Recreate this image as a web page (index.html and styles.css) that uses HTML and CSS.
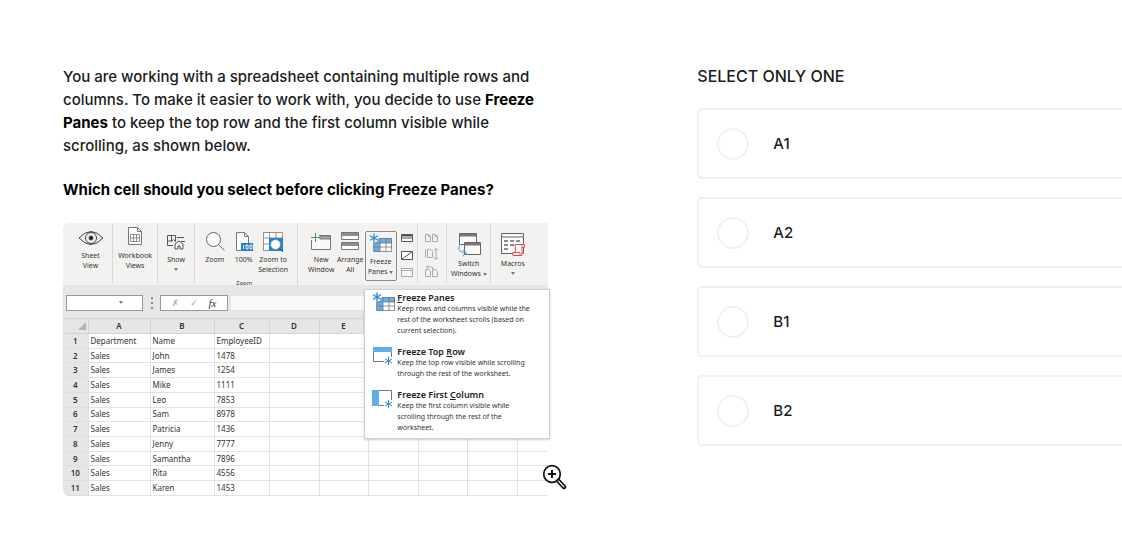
FILE: index.html
```
<!DOCTYPE html>
<html lang="en">
<head>
  <meta charset="UTF-8" />
  <meta name="viewport" content="width=device-width, initial-scale=1.0"/>
  <title>Freeze Panes Question</title>
  <link rel="stylesheet" href="styles.css">
</head>
<body>
  <main class="page">
    <!-- Question -->
    <section class="question">
      <p>You are working with a spreadsheet containing multiple rows and columns. To make it easier to work with, you decide to use <strong>Freeze Panes</strong> to keep the top row and the first column visible while scrolling, as shown below.</p>
      <p><strong>Which cell should you select before clicking Freeze Panes?</strong></p>

      <div class="figure">
        <div class="sheet">
          <!-- Ribbon -->
          <div class="ribbon">
            <div class="group group-sheet">
              <button class="tool tool-high">
                <svg width="28" height="22" viewBox="0 0 28 22" fill="none" stroke="#444"><path d="M2 11Q14-2 26 11Q14 24 2 11Z"/><circle cx="14" cy="11" r="5.5"/><circle cx="14" cy="11" r="2" fill="#222"/></svg>
                <span>Sheet<br>View</span>
              </button>
            </div>
            <div class="group">
              <button class="tool tool-high">
                <svg width="22" height="22" viewBox="0 0 22 22" fill="#fff" stroke="#777"><path d="M4.500.5h9l4 4v13h-13zM13.500.5v4h4"/><path d="M6.500 7.500h9v7h-9zM6.500 11h9M9.500 7.500v7M12.500 7.500v7" stroke-width=".8"/></svg>
                <span>Workbook<br>Views</span>
              </button>
            </div>
            <div class="group">
              <button class="tool">
                <svg width="22" height="22" viewBox="0 0 22 22" fill="none" stroke="#555"><path d="M8 14.500H2.500v-10h8v6l-2-2-2 2v-6M12 6.500h7M2.500 10h4M16 10.500h4M10 14v-1l4-3 4 3v5h-3v-3h-2v3h-3z"/></svg>
                <span>Show</span>
                <i class="arrow"></i>
              </button>
            </div>
            <div class="group group-zoom">
              <div class="group-row">
                <button class="tool">
                  <svg width="22" height="22" viewBox="0 0 22 22" fill="#fafafa" stroke="#666"><circle cx="9.500" cy="8.500" r="7"/><path d="M14.500 13.500l6 6"/></svg>
                  <span>Zoom</span>
                </button>
                <button class="tool">
                  <svg width="22" height="22" viewBox="0 0 22 22" fill="#fff" stroke="#777"><path d="M3.500 1.500h8l4 4v14h-12zM11.500 1.500v4h4"/><path d="M8 12h12v8H8z" fill="#1e7fc4" stroke="none"/><path d="M10.500 14v4M13 14h2v4h-2zM17 14h2v4h-2z" fill="none" stroke="#fff" stroke-width=".9"/></svg>
                  <span>100%</span>
                </button>
                <button class="tool">
                  <svg width="22" height="22" viewBox="0 0 22 22" fill="#fff" stroke="#777"><path d="M1.500 1.500h19v18h-19zM1.500 7h19M1.500 13h19M7.500 1.500v18M14 1.500v18" stroke-width=".8"/><path d="M7 7h14v13H7z" fill="#2484c6" stroke="none"/><circle cx="13.500" cy="13.500" r="4.500" stroke="#ddd"/><path d="M17 17l4 4" stroke="#444"/></svg>
                  <span>Zoom to<br>Selection</span>
                </button>
              </div>
              <span class="group-name">Zoom</span>
            </div>
            <div class="group group-window">
              <button class="tool">
                <svg width="22" height="22" viewBox="0 0 22 22" fill="none" stroke="#777"><path d="M1.500 9v9.500h19v-14H9" fill="#fafafa"/><path d="M10 5h10v3H10z" fill="#aaa"/><path d="M5.500 2v9M1 6.500h9" stroke="#4c9f57"/></svg>
                <span>New<br>Window</span>
              </button>
              <button class="tool">
                <svg width="22" height="22" viewBox="0 0 22 22" fill="#fff" stroke="#777"><path d="M2.500 1.500h17v7h-17zM2.500 11.500h17v7h-17z"/><path d="M3 2h16v3H3zM3 12h16v3H3z" fill="#8d8d8d" stroke="none"/></svg>
                <span>Arrange<br>All</span>
              </button>
              <button class="tool tool-open" aria-expanded="true">
                <svg width="24" height="22" viewBox="0 0 24 22"><use href="#panes"/></svg>
                <span>Freeze<br>Panes <i class="arrow"></i></span>
              </button>
              <div class="stack">
                <button aria-label="Split"><svg width="12" height="10" viewBox="0 0 12 10" fill="#fff" stroke="#555"><path d="M.5 1.500h11v7H.5zM.5 5h11"/><path d="M1 1.500h10v2H1z" fill="#555" stroke="none"/></svg></button>
                <button aria-label="Hide"><svg width="12" height="10" viewBox="0 0 12 10" fill="#fff" stroke="#555"><path d="M.5 1.500h11v8H.5zM1 9L11 2"/></svg></button>
                <button aria-label="Unhide"><svg width="12" height="10" viewBox="0 0 12 10" fill="#f7f7f7" stroke="#aaa"><path d="M.5 1.500h11v8H.5zM.5 3.500h11"/></svg></button>
              </div>
            </div>
            <div class="group">
              <div class="stack">
                <button aria-label="View side by side"><svg width="14" height="10" viewBox="0 0 14 10" fill="none" stroke="#aaa"><path d="M.5 1.500h3l2 2v5h-5zM7.500 1.500h3l2 2v5h-5zM3.500 1.500v2h2M10.500 1.500v2h2"/></svg></button>
                <button aria-label="Synchronous scrolling"><svg width="14" height="12" viewBox="0 0 14 12" fill="none" stroke="#aaa"><path d="M.5 1.500v8M2.500 1.500h3l2 2v6h-5zM11 .5v11M9 2.500l2-2 2 2M9 9.500l2 2 2-2"/></svg></button>
                <button aria-label="Reset window position"><svg width="14" height="12" viewBox="0 0 14 12" fill="none" stroke="#aaa"><path d="M.5 4.500h3l2 2v5h-5zM7.500 4.500h3l2 2v5h-5zM1.500 2h6v2M3.500.5l-2 1.500 2 1.500"/></svg></button>
              </div>
            </div>
            <div class="group">
              <button class="tool tool-low">
                <svg width="24" height="24" viewBox="0 0 24 24" fill="#fafafa" stroke="#666"><path d="M2.500.5h17v11h-17z"/><path d="M3 1h16v2.500H3z" fill="#777" stroke="none"/><path d="M7.500 9.500h16v12h-16z"/><path d="M8 10h15v2.500H8z" fill="#777" stroke="none"/><path d="M4 11c-4 4-3 8 5 9M6 17l3.500 3-4 3" stroke="#3a96d6" fill="none"/></svg>
                <span>Switch<br>Windows <i class="arrow"></i></span>
              </button>
            </div>
            <div class="group group-macros">
              <button class="tool tool-low">
                <svg width="24" height="24" viewBox="0 0 24 24" fill="#fafafa" stroke="#666"><path d="M.5.5h22v20H.5zM.5 4h22"/><path d="M3 8h4M9 8h4M15 8h4M3 12h4M9 12h4M3 16h4" stroke-width="1.500"/><path d="M14 11.500h9.500v3H21v8h-9v-3h2.500zM21 14.500v-3M12 19.500h7v3" stroke="#e8484c" fill="#fff"/></svg>
                <span>Macros</span>
                <i class="arrow"></i>
              </button>
            </div>
          </div>

          <!-- Formula bar -->
          <div class="formula-bar">
            <div class="name-box">
              <select aria-label="Name box"><option value=""></option></select>
              <i class="arrow"></i>
            </div>
            <div class="dots"><i></i><i></i><i></i></div>
            <div class="fx-box">
              <button class="fx-muted" aria-label="Cancel">✗</button>
              <button class="fx-muted" aria-label="Enter">✓</button>
              <button aria-label="Insert function">fx</button>
            </div>
            <input class="formula" type="text" aria-label="Formula">
          </div>

          <table class="cells">
            <colgroup><col class="c-num"><col class="c-a"><col class="c-b"><col class="c-c"><col class="c-d"><col class="c-e"><col class="c-d"><col class="c-e"><col class="c-d"><col></colgroup>
            <thead>
              <tr><th class="corner"><i></i></th><th>A</th><th>B</th><th>C</th><th>D</th><th>E</th><th></th><th></th><th></th><th></th></tr>
            </thead>
            <tbody>
              <tr><th>1</th><td>Department</td><td>Name</td><td>EmployeeID</td><td></td><td></td><td></td><td></td><td></td><td></td></tr>
              <tr><th>2</th><td>Sales</td><td>John</td><td>1478</td><td></td><td></td><td></td><td></td><td></td><td></td></tr>
              <tr><th>3</th><td>Sales</td><td>James</td><td>1254</td><td></td><td></td><td></td><td></td><td></td><td></td></tr>
              <tr><th>4</th><td>Sales</td><td>Mike</td><td>1111</td><td></td><td></td><td></td><td></td><td></td><td></td></tr>
              <tr><th>5</th><td>Sales</td><td>Leo</td><td>7853</td><td></td><td></td><td></td><td></td><td></td><td></td></tr>
              <tr><th>6</th><td>Sales</td><td>Sam</td><td>8978</td><td></td><td></td><td></td><td></td><td></td><td></td></tr>
              <tr><th>7</th><td>Sales</td><td>Patricia</td><td>1436</td><td></td><td></td><td></td><td></td><td></td><td></td></tr>
              <tr><th>8</th><td>Sales</td><td>Jenny</td><td>7777</td><td></td><td></td><td></td><td></td><td></td><td></td></tr>
              <tr><th>9</th><td>Sales</td><td>Samantha</td><td>7896</td><td></td><td></td><td></td><td></td><td></td><td></td></tr>
              <tr><th>10</th><td>Sales</td><td>Rita</td><td>4556</td><td></td><td></td><td></td><td></td><td></td><td></td></tr>
              <tr><th>11</th><td>Sales</td><td>Karen</td><td>1453</td><td></td><td></td><td></td><td></td><td></td><td></td></tr>
            </tbody>
          </table>
        </div>

        <!-- Freeze Panes menu -->
        <div class="menu">
          <button class="menu-item">
            <svg width="24" height="22" viewBox="0 0 24 22">
              <g id="panes"><path d="M4.500 5.500h18v13h-18z" fill="#fff"/><path d="M5 5h18v5H5zM5 10h6v9H5z" fill="#62aeea"/><path d="M4.500 9.500v9h18v-13H11M5 10h18M5 14h18M11 5v14M17 5v14" fill="none" stroke="#777" stroke-width=".8"/><circle cx="5" cy="5" r="4.500" fill="#f6f6f6"/><path d="M5 .5v9M1 2.700l8 4.600M1 7.300l8-4.600" stroke="#268bd0" stroke-width="1.300"/></g>
            </svg>
            <span><b><u>F</u>reeze Panes</b>Keep rows and columns visible while the rest of the worksheet scrolls (based on current selection).</span>
          </button>
          <button class="menu-item">
            <svg width="24" height="22" viewBox="0 0 24 22" fill="none"><path d="M12 15.500H1.500v-14h18V11" stroke="#777"/><path d="M1 1h19v5H1z" fill="#62aeea"/><path d="M16.500 11v8M13 13l7 4M13 17l7-4" stroke="#268bd0"/></svg>
            <span><b>Freeze Top <u>R</u>ow</b>Keep the top row visible while scrolling through the rest of the worksheet.</span>
          </button>
          <button class="menu-item">
            <svg width="24" height="22" viewBox="0 0 24 22" fill="none"><path d="M12 16.500H.5v-15h19V11" stroke="#777"/><path d="M0 1h7v16H0z" fill="#62aeea"/><path d="M16.500 11v8M13 13l7 4M13 17l7-4" stroke="#268bd0"/></svg>
            <span><b>Freeze First <u>C</u>olumn</b>Keep the first column visible while scrolling through the rest of the worksheet.</span>
          </button>
        </div>

        <button class="enlarge" aria-label="Enlarge image">
          <svg width="26" height="26" viewBox="0 0 26 26" fill="none" stroke="#111" stroke-width="1.700"><circle cx="10" cy="10" r="8.300"/><path d="M10 6v8M6 10h8" stroke-width="2"/><path d="M14.500 17l2-2 7 7.500q0 2-2 2z"/></svg>
        </button>
      </div>
    </section>

    <!-- Answers -->
    <section class="answers">
      <h2>SELECT ONLY ONE</h2>
      <label class="option"><input type="radio" name="answer" value="A1"><span>A1</span></label>
      <label class="option"><input type="radio" name="answer" value="A2"><span>A2</span></label>
      <label class="option"><input type="radio" name="answer" value="B1"><span>B1</span></label>
      <label class="option"><input type="radio" name="answer" value="B2"><span>B2</span></label>
    </section>
  </main>
</body>
</html>
```
FILE: styles.css
```
* {
  box-sizing: border-box;
}

body {
  font-family: Inter, sans-serif;
  font-size: 15px;
  font-weight: 500;
  line-height: 23px;
  color: #1c1c1c;
  background-color: #fff;
  margin: 0;
}

button {
  font: inherit;
  color: inherit;
  background: none;
  border: none;
  padding: 0;
  cursor: pointer;
}

svg {
  display: block;
  flex: none;
}

.page {
  display: grid;
  grid-template-columns: minmax(0, 8fr) minmax(0, 7fr);
  gap: 149px;
  padding: 65px 0 40px 63px;
}

.question p {
  margin: 0 0 21px;
}

.question strong {
  font-weight: 700;
  color: #000;
}

.figure {
  position: relative;
  margin-top: 22px;
  font-family: "Noto Sans", sans-serif;
  font-size: 8px;
  font-weight: 400;
  line-height: 10px;
  color: #333;
}

.sheet {
  border-radius: 6px 0 0 6px;
  overflow: hidden;
}

/* Ribbon */
.ribbon {
  display: grid;
  grid-template-columns: 50fr 45fr 37fr 103fr 120fr 29fr 44fr 57fr;
  height: 64px;
  background-color: #f3f2f1;
  border-bottom: 2px solid #e6e6e6;
  font-size: 7px;
}

.group {
  display: flex;
  justify-content: center;
  align-items: flex-start;
  min-width: 0;
  border-right: 1px solid #d8d8d8;
  height: 60px;
}

.group:last-child {
  border-right: none;
}

.group-sheet {
  padding-left: 6px;
}

.group-zoom {
  flex-direction: column;
  align-items: center;
  justify-content: space-between;
  height: 64px;
  padding-right: 4px;
}

.group-window {
  padding-left: 8px;
}

.group-macros {
  padding-right: 14px;
}

.group-row {
  display: flex;
}

.group-name {
  line-height: 8px;
  font-size: 6px;
}

.tool {
  display: flex;
  flex-direction: column;
  align-items: center;
  min-width: 29px;
  padding: 8px 0 0;
  line-height: 10px;
  white-space: nowrap;
}

.tool svg {
  margin-bottom: 2px;
}

.tool-high {
  padding-top: 4px;
}

.tool-low {
  padding-top: 10px;
}

.tool-open {
  min-width: 32px;
  height: 50px;
  margin-top: 8px;
  padding-top: 1px;
  border: 1px solid #8a8a8a;
  border-radius: 2px;
}

.arrow {
  display: inline-block;
  border: 2px solid transparent;
  border-top: 3px solid #777;
  border-bottom: none;
}

.tool > .arrow {
  margin-top: 3px;
}

.stack {
  display: flex;
  flex-direction: column;
  justify-content: space-between;
  align-items: center;
  width: 20px;
  height: 44px;
  margin-top: 10px;
}

/* Formula bar */
.formula-bar {
  display: flex;
  align-items: center;
  gap: 2px;
  height: 31px;
  padding-left: 3px;
  background-color: #e6e6e6;
}

.name-box {
  display: grid;
  align-items: center;
  width: 77px;
  height: 16px;
  background-color: #fff;
  border: 1px solid #999;
}

.name-box select {
  grid-area: 1 / 1;
  width: 100%;
  height: 14px;
  appearance: none;
  border: none;
  background: none;
}

.name-box .arrow {
  grid-area: 1 / 1;
  justify-self: end;
  margin-right: 19px;
  pointer-events: none;
}

.dots {
  display: flex;
  flex-direction: column;
  align-items: center;
  gap: 3px;
  width: 13px;
}

.dots i {
  width: 2px;
  height: 2px;
  background-color: #888;
}

.fx-box {
  display: flex;
  justify-content: space-around;
  align-items: center;
  width: 68px;
  height: 16px;
  padding: 0 5px;
  background-color: #fff;
  border: 1px solid #999;
  font-family: "Liberation Serif", serif;
  font-size: 11px;
  font-style: italic;
}

.fx-muted {
  font-family: "DejaVu Sans", sans-serif;
  font-size: 9px;
  color: #aaa;
}

.formula {
  flex: 1;
  min-width: 0;
  height: 16px;
  border: 1px solid #e2e4e6;
  background-color: #f7f9fc;
}

/* Cells */
.cells {
  width: 100%;
  height: 178px;
  table-layout: fixed;
  border-collapse: collapse;
}

.cells thead tr {
  height: 15px;
}

.cells th,
.cells td {
  padding: 0 2px;
  border: 1px solid #e2e2e2;
  border-left: none;
  text-align: left;
  white-space: nowrap;
}

.cells td:last-child {
  border-right: none;
}

.cells th {
  background-color: #e6e6e6;
  border-color: #d4d4d4;
  text-align: center;
  font-weight: 600;
}

.cells tbody th {
  border-color: #dedede;
}

.c-num {
  width: 25px;
}

.c-a {
  width: 62px;
}

.c-b {
  width: 64px;
}

.c-c {
  width: 55px;
}

.c-d {
  width: 50px;
}

.c-e {
  width: 49px;
}

.corner i {
  display: block;
  width: 0;
  margin-left: auto;
  border-left: 8px solid transparent;
  border-bottom: 8px solid #b5b5b5;
}

/* Freeze Panes menu */
.menu {
  position: absolute;
  top: 66px;
  right: -2px;
  display: flex;
  flex-direction: column;
  gap: 10px;
  width: 186px;
  padding: 2px 14px 5px 7px;
  background-color: #fff;
  border: 1px solid #d0d0d0;
  box-shadow: 0 1px 2px rgba(0,0,0,0.2);
}

.menu-item {
  display: flex;
  gap: 1px;
  font-size: 7px;
  line-height: 11px;
  text-align: left;
}

.menu-item b {
  display: block;
  font-size: 9px;
  font-weight: 600;
  color: #222;
}

.enlarge {
  position: absolute;
  right: -20px;
  bottom: 6px;
}

/* Answers */
.answers {
  display: flex;
  flex-direction: column;
  gap: 18px;
}

.answers h2 {
  margin: 0 0 2px;
  font-size: 16px;
  font-weight: 500;
}

.option {
  display: flex;
  align-items: center;
  gap: 24px;
  padding: 18px;
  height: 71px;
  border: 2px solid #f1f1f1;
  border-right: none;
  border-radius: 5px 0 0 5px;
  cursor: pointer;
}

.option input {
  appearance: none;
  width: 32px;
  height: 32px;
  margin: 0;
  border: 2px solid #f1f1f1;
  border-radius: 50%;
}

.option input:checked {
  border: 10px solid #1c1c1c;
}
```
